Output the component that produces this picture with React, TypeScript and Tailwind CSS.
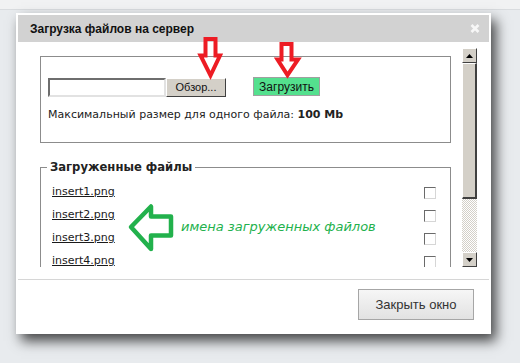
const files = ['insert1.png', 'insert2.png', 'insert3.png', 'insert4.png']

function ScrollButton({ dir }: { dir: 'up' | 'down' }) {
  return (
    <div className="flex h-[15px] w-[15px] items-center justify-center border border-t-white border-l-white border-r-[#404040] border-b-[#404040] bg-[#d4d0c8]">
      <svg width="7" height="4" viewBox="0 0 7 4">
        {dir === 'up' ? (
          <polygon points="3.5,0 7,4 0,4" fill="#000" />
        ) : (
          <polygon points="0,0 7,0 3.5,4" fill="#000" />
        )}
      </svg>
    </div>
  )
}

export default function App() {
  return (
    <div className="relative h-[363px] w-[520px] overflow-hidden bg-[#e8ebee] font-['DejaVu_Sans',sans-serif] text-[#222]">
      <div className="h-[10px] border-b border-[#d9dcdf] bg-[#f1f2f3]" />

      <div className="pl-[16px] pt-[3px]">
        <div className="flex h-[321px] w-[475px] flex-col bg-white p-[2px] shadow-[5px_7px_12px_rgba(0,0,0,0.7)]">
          {/* title bar */}
          <div className="flex h-[27px] items-center justify-between bg-[#d2d2d2] pl-[12px] pr-[9px]">
            <span className="font-['Liberation_Sans',sans-serif] text-[12px] font-bold text-[#111]">
              Загрузка файлов на сервер
            </span>
            <svg width="10" height="9" viewBox="0 0 10 9">
              <path d="M1.5 1 L8.5 8 M8.5 1 L1.5 8" stroke="#f7f7f7" strokeWidth="2.6" />
            </svg>
          </div>

          {/* scrolling body */}
          <div className="mt-[6px] flex h-[219px] gap-[11px] pl-[22px] pr-[12px]">
            <div className="w-[411px] overflow-hidden">
              <div className="mt-[8px] h-[87px] border border-[#8c8c8c] pl-[7px] pt-[21px]">
                <div className="flex h-[19px] items-center">
                  <div className="h-[19px] w-[118px] border-2 border-t-[#6e6e6e] border-l-[#6e6e6e] border-b-[#e2e2e2] border-r-[#e2e2e2] bg-white" />
                  <button
                    type="button"
                    className="flex h-[19px] w-[60px] items-center justify-center border border-t-white border-l-white border-r-[#404040] border-b-[#404040] bg-[#d4d0c8] font-['Liberation_Sans',sans-serif] text-[11px] text-[#111]"
                  >
                    Обзор...
                  </button>
                  <button
                    type="button"
                    className="-mt-[2px] ml-[27px] flex h-[19px] w-[67px] items-center justify-center border border-[#a0a0a0] bg-[#54e08e] font-['Liberation_Sans',sans-serif] text-[12px] text-[#111]"
                  >
                    Загрузить
                  </button>
                </div>
                <p className="mt-[11px] text-[11px] leading-[14px]">
                  Максимальный размер для одного файла: <b>100 Mb</b>
                </p>
              </div>

              <fieldset className="mt-[17px] border border-[#8c8c8c]">
                <legend className="ml-[6px] px-[3px] text-[11.6px] font-bold leading-[14px]">
                  Загруженные файлы
                </legend>
                <div className="pl-[11px] pr-[14px] pt-[7px]">
                  {files.map((f) => (
                    <div key={f} className="flex h-[23px] items-center justify-between">
                      <a href="#" className="text-[11px] text-[#1a1a1a] underline">
                        {f}
                      </a>
                      <div className="h-[12px] w-[12px] border border-t-[#6a6a6a] border-l-[#6a6a6a] border-b-[#d6d6d6] border-r-[#d6d6d6] bg-white" />
                    </div>
                  ))}
                </div>
              </fieldset>
            </div>

            {/* scrollbar */}
            <div className="flex w-[15px] flex-col">
              <ScrollButton dir="up" />
              <div className="h-[136px] border border-t-white border-l-white border-r-2 border-r-[#404040] border-b-2 border-b-[#404040] bg-[#d4d0c8]" />
              <div className="flex-1 bg-[repeating-conic-gradient(#d4d0c8_0_25%,#ffffff_0_50%)] bg-[length:2px_2px]" />
              <ScrollButton dir="down" />
            </div>
          </div>

          {/* footer */}
          <div className="mt-[12px] flex flex-1 justify-end border-t border-[#d6d6d6] pr-[15px] pt-[9px]">
            <button
              type="button"
              className="h-[31px] w-[116px] border border-[#a6a6a6] bg-gradient-to-b from-[#f6f6f6] to-[#e2e2e2] font-['Liberation_Sans',sans-serif] text-[13px] text-[#333]"
            >
              Закрыть окно
            </button>
          </div>
        </div>
      </div>

      {/* annotations */}
      <svg className="pointer-events-none absolute left-0 top-0" width="520" height="363" viewBox="0 0 520 363">
        <path
          d="M205.5 39 H215.5 V55.5 H220 L210.5 75.5 L200.5 55.5 H205.5 Z"
          fill="none"
          stroke="#ed1c24"
          strokeWidth="4"
        />
        <path
          d="M281.5 44 H291.5 V59.5 H298 L287.5 75 L277.5 59.5 H281.5 Z"
          fill="none"
          stroke="#ed1c24"
          strokeWidth="4"
        />
        <path
          d="M131 227 L151 206.5 V216.5 H171 V235.5 H151 V249 Z"
          fill="none"
          stroke="#22b14c"
          strokeWidth="4.5"
          strokeLinejoin="round"
        />
      </svg>
      <span className="absolute left-[181px] top-[219px] text-[13px] italic leading-[16px] text-[#22b14c]">
        имена загруженных файлов
      </span>
    </div>
  )
}
